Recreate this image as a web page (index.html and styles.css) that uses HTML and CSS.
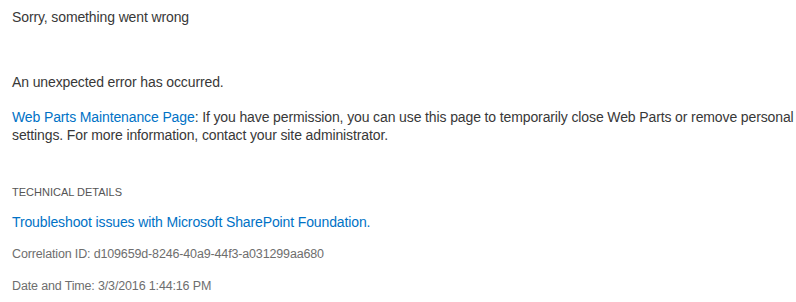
FILE: index.html
```html
<!DOCTYPE html>
<html>
<head>
<meta charset="utf-8">
<link rel="stylesheet" href="styles.css">
</head>
<body>
<div class="page">
  <div class="title">Sorry, something went wrong</div>
  <div class="message">An unexpected error has occurred.</div>
  <div class="detail"><a class="link" href="#">Web Parts Maintenance Page</a>: If you have permission, you can use this page to temporarily close Web Parts or remove personal settings. For more information, contact your site administrator.</div>
  <div class="tech-heading">TECHNICAL DETAILS</div>
  <div class="tech-link"><a class="link" href="#">Troubleshoot issues with Microsoft SharePoint Foundation.</a></div>
  <div class="tech-info">Correlation ID: d109659d-8246-40a9-44f3-a031299aa680</div>
  <div class="tech-info last">Date and Time: 3/3/2016 1:44:16 PM</div>
</div>
</body>
</html>
```
FILE: styles.css
```css
html, body {
  margin: 0;
  padding: 0;
  background: #ffffff;
}
.page {
  padding: 8px 2px 0 12px;
  font-family: "Liberation Sans", Arial, sans-serif;
  color: #383838;
  font-size: 14px;
  line-height: 18px;
  letter-spacing: -0.12px;
}
.title {
  margin-bottom: 47px;
}
.message {
  margin-bottom: 17px;
}
.detail {
  margin-bottom: 41px;
}
.link {
  color: #0072c6;
  text-decoration: none;
}
.tech-heading {
  font-size: 11px;
  line-height: 14px;
  letter-spacing: 0;
  color: #555555;
  margin-bottom: 14px;
}
.tech-link {
  margin-bottom: 13.5px;
}
.tech-info {
  font-size: 12.5px;
  letter-spacing: -0.15px;
  color: #6e6e6e;
  margin-bottom: 14px;
}
.tech-info.last {
  margin-bottom: 0;
}
```
